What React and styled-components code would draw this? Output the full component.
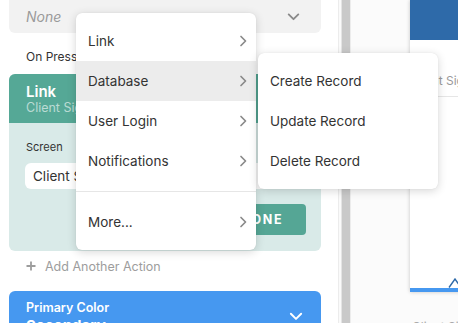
import React from "react";
import styled, { createGlobalStyle } from "styled-components";

const GlobalStyle = createGlobalStyle`
  html, body {
    margin: 0;
    padding: 0;
    overflow: hidden;
    background: #fafafa;
  }
  body {
    font-family: "Inter", "Open Sans", sans-serif;
    color: #333;
  }
`;

const Chevron = ({ dir = "right", color = "#8a8a8a", size = 14 }) => (
  <svg width={size} height={size} viewBox="0 0 14 14" fill="none">
    {dir === "right" ? (
      <path d="M5 2.5L9.5 7L5 11.5" stroke={color} strokeWidth="1.7" strokeLinecap="round" strokeLinejoin="round" />
    ) : (
      <path d="M2.5 5L7 9.5L11.5 5" stroke={color} strokeWidth="1.7" strokeLinecap="round" strokeLinejoin="round" />
    )}
  </svg>
);

const Screen = styled.div`
  position: relative;
  display: flex;
  width: 458px;
  height: 323px;
  overflow: hidden;
`;

const LeftPanel = styled.div`
  flex-shrink: 0;
  padding: 0 17px 0 9px;
  width: 312px;
  background: #fff;
  border-right: 1px solid #ececec;
  display: flex;
  flex-direction: column;

  & > * {
    flex-shrink: 0;
  }
`;

const Select = styled.div`
  margin-top: -8px;
  height: 41px;
  background: #f2f2f2;
  border-radius: 6px;
  display: flex;
  align-items: center;
  justify-content: space-between;
  padding: 8px 20px 0 17px;
  box-sizing: border-box;
  font-size: 14px;
  font-style: italic;
  color: #9a9a9a;
`;

const FieldLabel = styled.div`
  font-size: ${(p) => p.size || 12}px;
  color: #333;
  padding-left: ${(p) => p.indent || 17}px;
  margin: ${(p) => p.margin || "0"};
`;

const ActionCard = styled.div`
  border-radius: 6px;
  overflow: hidden;
  background: #d9eae8;
`;

const CardHeader = styled.div`
  background: #55a896;
  height: 49px;
  padding: 0 17px;
  display: flex;
  flex-direction: column;
  justify-content: center;
  color: #fff;
`;

const CardTitle = styled.div`
  font-size: 15px;
  font-weight: 600;
  line-height: 17px;
`;

const CardSub = styled.div`
  font-size: 12.5px;
  line-height: 15px;
  color: rgba(255, 255, 255, 0.6);
`;

const CardBody = styled.div`
  padding: 17px 15px 16px 16px;
  display: flex;
  flex-direction: column;
`;

const Input = styled.div`
  margin-top: 9px;
  height: 26px;
  background: #fff;
  border-radius: 6px;
  display: flex;
  align-items: center;
  padding-left: 8px;
  font-size: 13.5px;
  color: #333;
`;

const DoneButton = styled.div`
  align-self: flex-end;
  margin-top: 15px;
  width: 88px;
  height: 31px;
  border-radius: 4px;
  background: #55a695;
  color: #fff;
  font-size: 12.5px;
  font-weight: 700;
  letter-spacing: 1.6px;
  display: flex;
  align-items: center;
  justify-content: center;
`;

const AddAction = styled.div`
  display: flex;
  align-items: center;
  gap: 9px;
  padding-left: 17px;
  margin-top: 8px;
  height: 14px;
  font-size: 12.5px;
  color: #9d9d9d;
`;

const ColorCard = styled.div`
  margin-top: 18px;
  border-radius: 6px 6px 0 0;
  background: #4698f0;
  height: 60px;
  padding: 9px 17px 0;
  box-sizing: border-box;
  color: #fff;
  position: relative;
`;

const ColorLabel = styled.div`
  font-size: 12.5px;
  font-weight: 600;
  line-height: 16px;
`;

const ColorValue = styled.div`
  font-size: 15px;
  font-weight: 700;
  line-height: 20px;
`;

const CardChevron = styled.div`
  position: absolute;
  right: 17px;
  top: 17px;
`;

const Splitter = styled.div`
  width: 8px;
  flex-shrink: 0;
  margin-left: 2px;
  background: #c9c9c9;
  border-left: 1px solid #e4e4e4;
  border-right: 1px solid #ececec;
`;

const Canvas = styled.div`
  flex: 1;
  background: #fbfbfb;
  padding-left: 59px;
  display: flex;
  flex-direction: column;
`;

const Phone = styled.div`
  flex-shrink: 0;
  height: 292px;
  background: #fff;
  box-shadow: 0 0 4px rgba(0, 0, 0, 0.22);
  display: flex;
  flex-direction: column;
  width: 200px;
`;

const PhoneHeader = styled.div`
  height: 40px;
  background: #2e6aa9;
`;

const PhoneRow = styled.div`
  margin-top: 33px;
  height: 23px;
  border-bottom: 1px solid #e6e6e6;
  font-size: 12px;
  color: #9a9a9a;
  white-space: nowrap;
`;

const PhoneFooter = styled.div`
  margin-top: auto;
  height: 4px;
  background: #4698f0;
  position: relative;
`;

const FooterIcon = styled.svg`
  position: absolute;
  left: 38px;
  bottom: 4px;
`;

const Caption = styled.div`
  flex-shrink: 0;
  margin-top: 27px;
  padding-left: 2px;
  font-size: 12px;
  color: #aaa;
  white-space: nowrap;
`;

const Menu = styled.div`
  position: absolute;
  left: ${(p) => p.x}px;
  top: ${(p) => p.y}px;
  width: 180px;
  background: #fff;
  border-radius: 6px;
  padding: 8px 0;
  box-shadow: 0 2px 10px rgba(0, 0, 0, 0.16), 0 0 1px rgba(0, 0, 0, 0.12);
  z-index: ${(p) => p.z || 10};
`;

const MenuItem = styled.div`
  height: 40px;
  display: flex;
  align-items: center;
  justify-content: space-between;
  padding: 0 6px 0 12px;
  font-size: 13.5px;
  color: #333;
  background: ${(p) => (p.active ? "#ececec" : "transparent")};
`;

const Divider = styled.div`
  height: 1px;
  background: #e6e6e6;
  margin: 10px 0;
`;

const mainItems = ["Link", "Database", "User Login", "Notifications"];
const subItems = ["Create Record", "Update Record", "Delete Record"];

export default function App() {
  return (
    <>
      <GlobalStyle />
      <Screen>
        <LeftPanel>
          <Select>
            <span>None</span>
            <Chevron dir="down" color="#8a8a8a" size={15} />
          </Select>
          <FieldLabel margin="16px 0 10px">On Press</FieldLabel>
          <ActionCard>
            <CardHeader>
              <CardTitle>Link</CardTitle>
              <CardSub>Client Signup</CardSub>
            </CardHeader>
            <CardBody>
              <FieldLabel size={11} indent={1}>Screen</FieldLabel>
              <Input>Client Signup</Input>
              <DoneButton>DONE</DoneButton>
            </CardBody>
          </ActionCard>
          <AddAction>
            <svg width="10" height="10" viewBox="0 0 10 10">
              <path d="M5 0.5V9.5M0.5 5H9.5" stroke="#9d9d9d" strokeWidth="1.8" />
            </svg>
            <span>Add Another Action</span>
          </AddAction>
          <ColorCard>
            <ColorLabel>Primary Color</ColorLabel>
            <ColorValue>Secondary</ColorValue>
            <CardChevron>
              <Chevron dir="down" color="#fff" size={16} />
            </CardChevron>
          </ColorCard>
        </LeftPanel>
        <Splitter />
        <Canvas>
          <Phone>
            <PhoneHeader />
            <PhoneRow>Client Signup</PhoneRow>
            <PhoneFooter>
              <FooterIcon width="14" height="10" viewBox="0 0 14 10">
                <path d="M1 9.5L7 1L13 9.5" stroke="#2e6aa9" strokeWidth="1.4" fill="none" />
              </FooterIcon>
            </PhoneFooter>
          </Phone>
          <Caption>Client Signup</Caption>
        </Canvas>

        <Menu x={76} y={13}>
          {mainItems.map((item) => (
            <MenuItem key={item} active={item === "Database"}>
              <span>{item}</span>
              <Chevron />
            </MenuItem>
          ))}
          <Divider />
          <MenuItem>
            <span>More...</span>
            <Chevron />
          </MenuItem>
        </Menu>
        <Menu x={258} y={53} z={11}>
          {subItems.map((item) => (
            <MenuItem key={item}>
              <span>{item}</span>
            </MenuItem>
          ))}
        </Menu>
      </Screen>
    </>
  );
}
